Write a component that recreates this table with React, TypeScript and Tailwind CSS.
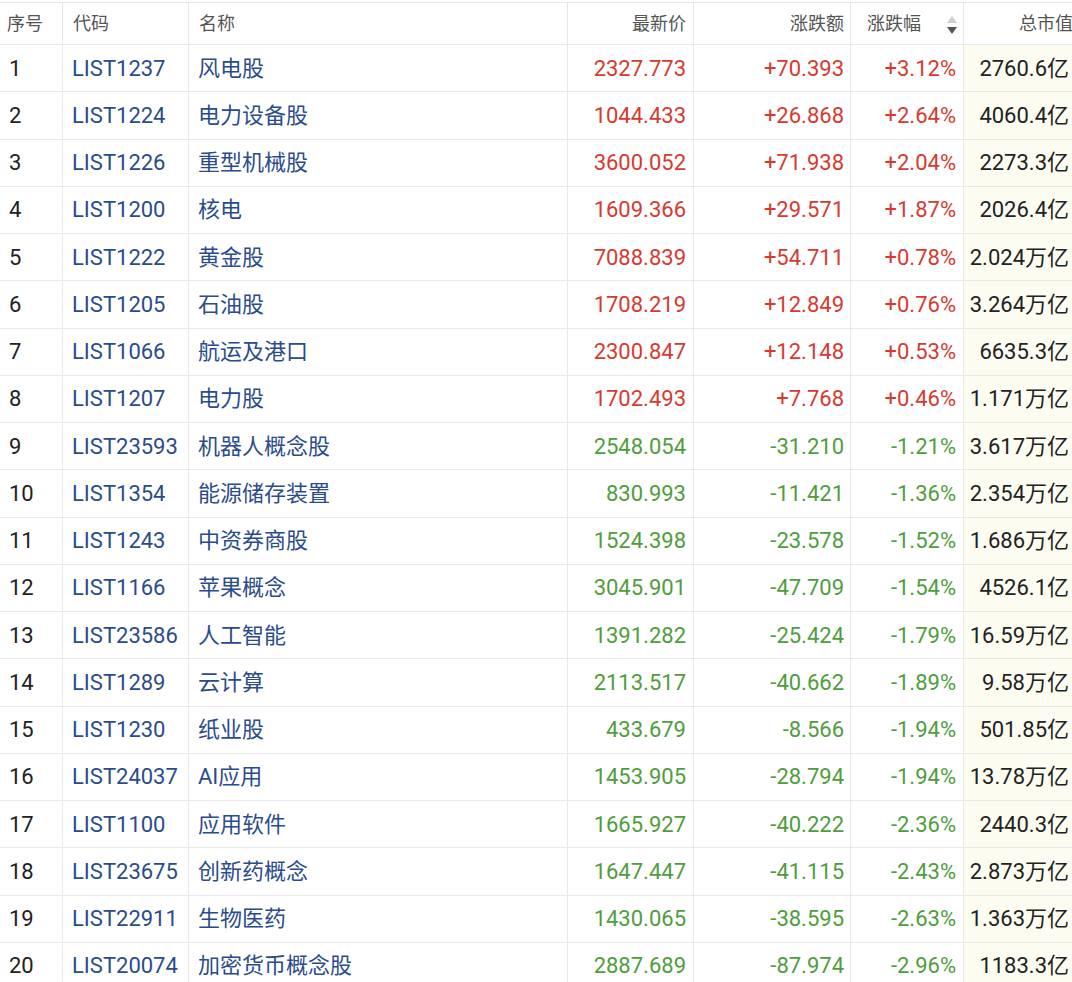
import React from "react";

type Row = [string, string, string, string, string, string];

const rows: Row[] = [
  ["LIST1237", "风电股", "2327.773", "+70.393", "+3.12%", "2760.6亿"],
  ["LIST1224", "电力设备股", "1044.433", "+26.868", "+2.64%", "4060.4亿"],
  ["LIST1226", "重型机械股", "3600.052", "+71.938", "+2.04%", "2273.3亿"],
  ["LIST1200", "核电", "1609.366", "+29.571", "+1.87%", "2026.4亿"],
  ["LIST1222", "黄金股", "7088.839", "+54.711", "+0.78%", "2.024万亿"],
  ["LIST1205", "石油股", "1708.219", "+12.849", "+0.76%", "3.264万亿"],
  ["LIST1066", "航运及港口", "2300.847", "+12.148", "+0.53%", "6635.3亿"],
  ["LIST1207", "电力股", "1702.493", "+7.768", "+0.46%", "1.171万亿"],
  ["LIST23593", "机器人概念股", "2548.054", "-31.210", "-1.21%", "3.617万亿"],
  ["LIST1354", "能源储存装置", "830.993", "-11.421", "-1.36%", "2.354万亿"],
  ["LIST1243", "中资券商股", "1524.398", "-23.578", "-1.52%", "1.686万亿"],
  ["LIST1166", "苹果概念", "3045.901", "-47.709", "-1.54%", "4526.1亿"],
  ["LIST23586", "人工智能", "1391.282", "-25.424", "-1.79%", "16.59万亿"],
  ["LIST1289", "云计算", "2113.517", "-40.662", "-1.89%", "9.58万亿"],
  ["LIST1230", "纸业股", "433.679", "-8.566", "-1.94%", "501.85亿"],
  ["LIST24037", "AI应用", "1453.905", "-28.794", "-1.94%", "13.78万亿"],
  ["LIST1100", "应用软件", "1665.927", "-40.222", "-2.36%", "2440.3亿"],
  ["LIST23675", "创新药概念", "1647.447", "-41.115", "-2.43%", "2.873万亿"],
  ["LIST22911", "生物医药", "1430.065", "-38.595", "-2.63%", "1.363万亿"],
  ["LIST20074", "加密货币概念股", "2887.689", "-87.974", "-2.96%", "1183.3亿"],
];

const font = {
  fontFamily: 'Roboto, "Noto Sans CJK SC", "Noto Sans", sans-serif',
};

const cols = "grid grid-cols-[63px_126px_379px_126px_157px_113px_122px]";

export default function App() {
  return (
    <div className="w-[1072px] h-[982px] overflow-hidden bg-white" style={font}>
      <div className="w-[1086px] pt-[2px]">
        <div className={`${cols} h-[43px] border-t border-b border-[#e6e6e6] text-[18px] text-[#555] items-stretch`}>
          <div className="border-r border-[#e6e6e6] pl-[7px] flex items-center">序号</div>
          <div className="border-r border-[#e6e6e6] pl-[10px] flex items-center">代码</div>
          <div className="border-r border-[#e6e6e6] pl-[10px] flex items-center">名称</div>
          <div className="border-r border-[#e6e6e6] pr-[7px] flex items-center justify-end">最新价</div>
          <div className="border-r border-[#e6e6e6] pr-[6px] flex items-center justify-end">涨跌额</div>
          <div className="border-r border-[#e6e6e6] pl-[16px] pr-[5px] flex items-center justify-between">
            <span>涨跌幅</span>
            <svg width="12" height="20" viewBox="0 0 12 20" className="mt-[2px]">
              <path d="M6 1 L11 8 L1 8 Z" fill="#cfcfcf" />
              <path d="M1 12 L11 12 L6 19 Z" fill="#555" />
            </svg>
          </div>
          <div className="pr-[13px] flex items-center justify-end">总市值</div>
        </div>
        {rows.map((r, i) => {
          const up = r[3].startsWith("+");
          const c = up ? "text-[#d63a30]" : "text-[#4f9d3d]";
          return (
            <div
              key={i}
              className={`${cols} h-[47.26px] border-b border-[#e9e9e9] text-[22px] items-stretch`}
            >
              <div className="border-r border-[#e9e9e9] pl-[9px] flex items-center text-[#222]">{i + 1}</div>
              <div className="border-r border-[#e9e9e9] pl-[9px] flex items-center text-[#2b4c8c]">{r[0]}</div>
              <div className="border-r border-[#e9e9e9] pl-[9px] flex items-center text-[#2b4c8c]">{r[1]}</div>
              <div className={`border-r border-[#e9e9e9] pr-[7px] flex items-center justify-end ${c}`}>{r[2]}</div>
              <div className={`border-r border-[#e9e9e9] pr-[6px] flex items-center justify-end ${c}`}>{r[3]}</div>
              <div className={`border-r border-[#e9e9e9] pr-[7px] flex items-center justify-end ${c}`}>{r[4]}</div>
              <div className="bg-[#fcfcf1] pr-[17px] flex items-center justify-end text-[#222]">{r[5]}</div>
            </div>
          );
        })}
      </div>
    </div>
  );
}
